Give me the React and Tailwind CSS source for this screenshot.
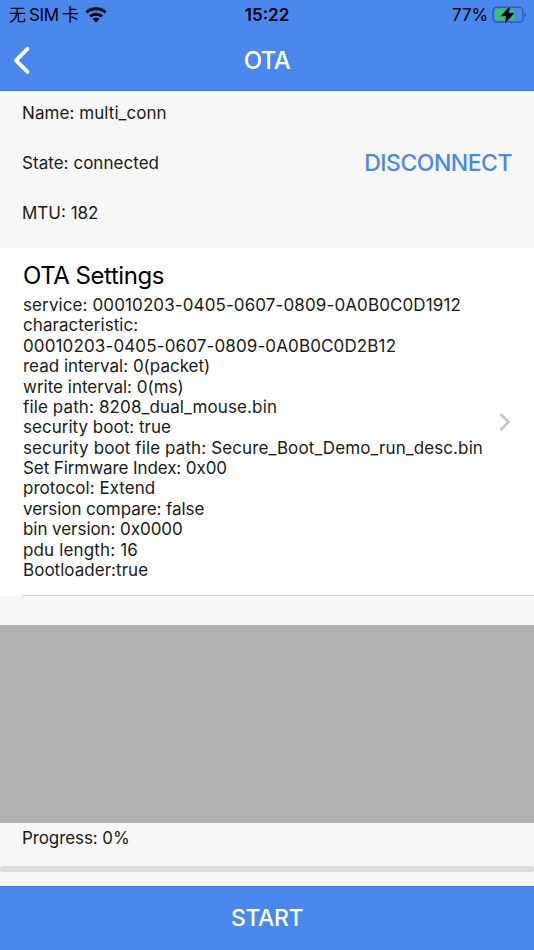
import { useState } from "react"

const settings = [
    { text: "service: 00010203-0405-0607-0809-0A0B0C0D1912", spacing: "tracking-[0.11px]" },
    { text: "characteristic:", spacing: "tracking-[0.06px]" },
    { text: "00010203-0405-0607-0809-0A0B0C0D2B12", spacing: "tracking-[0.13px]" },
    { text: "read interval: 0(packet)", spacing: "tracking-[0px]" },
    { text: "write interval: 0(ms)", spacing: "tracking-[0px]" },
    { text: "file path: 8208_dual_mouse.bin", spacing: "tracking-[0.12px]" },
    { text: "security boot: true", spacing: "tracking-[0.02px]" },
    { text: "security boot file path: Secure_Boot_Demo_run_desc.bin", spacing: "tracking-[0.11px]" },
    { text: "Set Firmware Index: 0x00", spacing: "tracking-[-0.09px]" },
    { text: "protocol: Extend", spacing: "tracking-[0.04px]" },
    { text: "version compare: false", spacing: "tracking-[-0.07px]" },
    { text: "bin version: 0x0000", spacing: "tracking-[-0.06px]" },
    { text: "pdu length: 16", spacing: "tracking-[0.15px]" },
    { text: "Bootloader:true", spacing: "tracking-[0.03px]" },
]

function WifiIcon() {
    return (
        <svg className="ml-[6px] h-[16px] w-[22px]" viewBox="0 0 22 16" fill="none" stroke="#000" strokeWidth="3">
            <path d="M1.4 5.3C6.8 .4 15.2 .4 20.6 5.3" />
            <path d="M5 9.4C8.4 6.4 13.6 6.4 17 9.4" />
            <path d="M7.5 12.1C9.5 10.4 12.5 10.4 14.5 12.1L11 15.5Z" fill="#000" stroke="none" />
        </svg>
    )
}

function BatteryIcon() {
    return (
        <svg className="ml-1 h-[18px] w-[35px]" viewBox="0 0 35 18">
            <rect x="1" y="1.2" width="30" height="15" rx="4" fill="none" stroke="#2d5290" strokeWidth="1.2" />
            <path d="M32.6 6.5C34.4 7.2 34.4 10.4 32.6 11.1Z" fill="#2d5290" />
            <rect x="3" y="3.2" width="19.5" height="11" rx="2" fill="#35c759" />
            <path d="M17.4 1L9.8 9.6H14.6L13.4 16.8L21.6 7.4H16.4Z" fill="#4a88ee" stroke="#4a88ee" strokeWidth="2.6" />
            <path d="M17.4 1L9.8 9.6H14.6L13.4 16.8L21.6 7.4H16.4Z" fill="#000" stroke="#000" strokeWidth=".7" strokeLinejoin="round" />
        </svg>
    )
}

function StatusBar() {
    return (
        <div className="grid h-[30px] grid-cols-[1fr_auto_1fr] items-center text-[17px] leading-[30px] text-black">
            <div className="flex items-center pl-[9px] text-[17px]">
                <span>无</span>
                <span className="ml-[3px] tracking-[-0.3px]">SIM</span>
                <span className="ml-[3px]">卡</span>
                <WifiIcon />
            </div>
            <span className="font-semibold">15:22</span>
            <div className="flex items-center justify-end pr-[7px]">
                <span className="tracking-[-0.1px]">77%</span>
                <BatteryIcon />
            </div>
        </div>
    )
}

function App() {
    const [connected, setConnected] = useState(true)
    const [progress, setProgress] = useState(0)

    return (
        <div className="flex h-[950px] w-[534px] flex-col overflow-hidden bg-[#f7f7f7] font-['Inter','Noto_Sans_CJK_SC',sans-serif] text-[17px] text-[#1a1a1a]">
            <header className="h-[91px] shrink-0 border-b border-[#377fe8] bg-[#4a88ee]">
                <StatusBar />
                <div className="grid h-[61px] grid-cols-3 items-center text-white">
                    <button className="pl-[12px]" aria-label="Back">
                        <svg className="h-[30px] w-[20px]" viewBox="0 0 20 30" fill="none" stroke="currentColor" strokeWidth="3.8" strokeLinecap="round" strokeLinejoin="round">
                            <path d="M15.5 2.8L4 14.3L15.5 25.8" />
                        </svg>
                    </button>
                    <h1 className="pt-px text-center text-[24px] font-medium tracking-[-0.6px]">OTA</h1>
                </div>
            </header>

            <section className="flex h-[157px] shrink-0 justify-between pl-[22px] pr-[22px]">
                <div className="flex flex-col pt-[10px] leading-[25px]">
                    <p className="h-[50px] tracking-[0.07px]">Name: multi_conn</p>
                    <p className="h-[50px] tracking-[0.04px]">State: {connected ? "connected" : "disconnected"}</p>
                    <p>MTU: 182</p>
                </div>
                <button
                    className="mt-[57px] h-[30px] text-[23px] font-medium leading-[30px] tracking-[-0.5px] text-[#4a88ee]"
                    onClick={() => setConnected(!connected)}
                >
                    {connected ? "DISCONNECT" : "CONNECT"}
                </button>
            </section>

            <section className="h-[348px] shrink-0 bg-white pl-[23px]">
                <div className="flex h-full items-center justify-between border-b border-[#cfcfcf] pr-[23px]">
                    <div className="h-full pt-[13px]">
                        <h2 className="h-[34px] text-[24px] leading-[30px] tracking-[-0.45px] text-black">OTA Settings</h2>
                        {settings.map((line) => (
                            <p key={line.text} className="h-[20.38px] whitespace-nowrap leading-[20.38px]">
                                <span className={line.spacing}>{line.text}</span>
                            </p>
                        ))}
                    </div>
                    <svg className="h-[20px] w-[12px] shrink-0" viewBox="0 0 12 20" fill="none" stroke="#c4c4c6" strokeWidth="2.6">
                        <path d="M1.5 2L9.5 10L1.5 18" />
                    </svg>
                </div>
            </section>

            <div className="mt-[29px] h-[198px] shrink-0 bg-[#b1b1b1]" />

            <div className="h-[62px] shrink-0">
                <p className="pl-[22px] pt-[3px] leading-[25px] tracking-[-0.1px]">Progress: {progress}%</p>
                <div className="mt-[15px] h-[6px] overflow-hidden rounded-full bg-[#dcdcdc]">
                    <div className="h-full bg-[#4a88ee]" style={{ width: `${progress}%` }} />
                </div>
            </div>

            <button
                className="mt-px h-[64px] shrink-0 border-t border-[#377fe8] bg-[#4a88ee] text-[23px] font-medium tracking-[-0.4px] text-white"
                onClick={() => setProgress(0)}
            >
                START
            </button>
        </div>
    )
}

export default App
